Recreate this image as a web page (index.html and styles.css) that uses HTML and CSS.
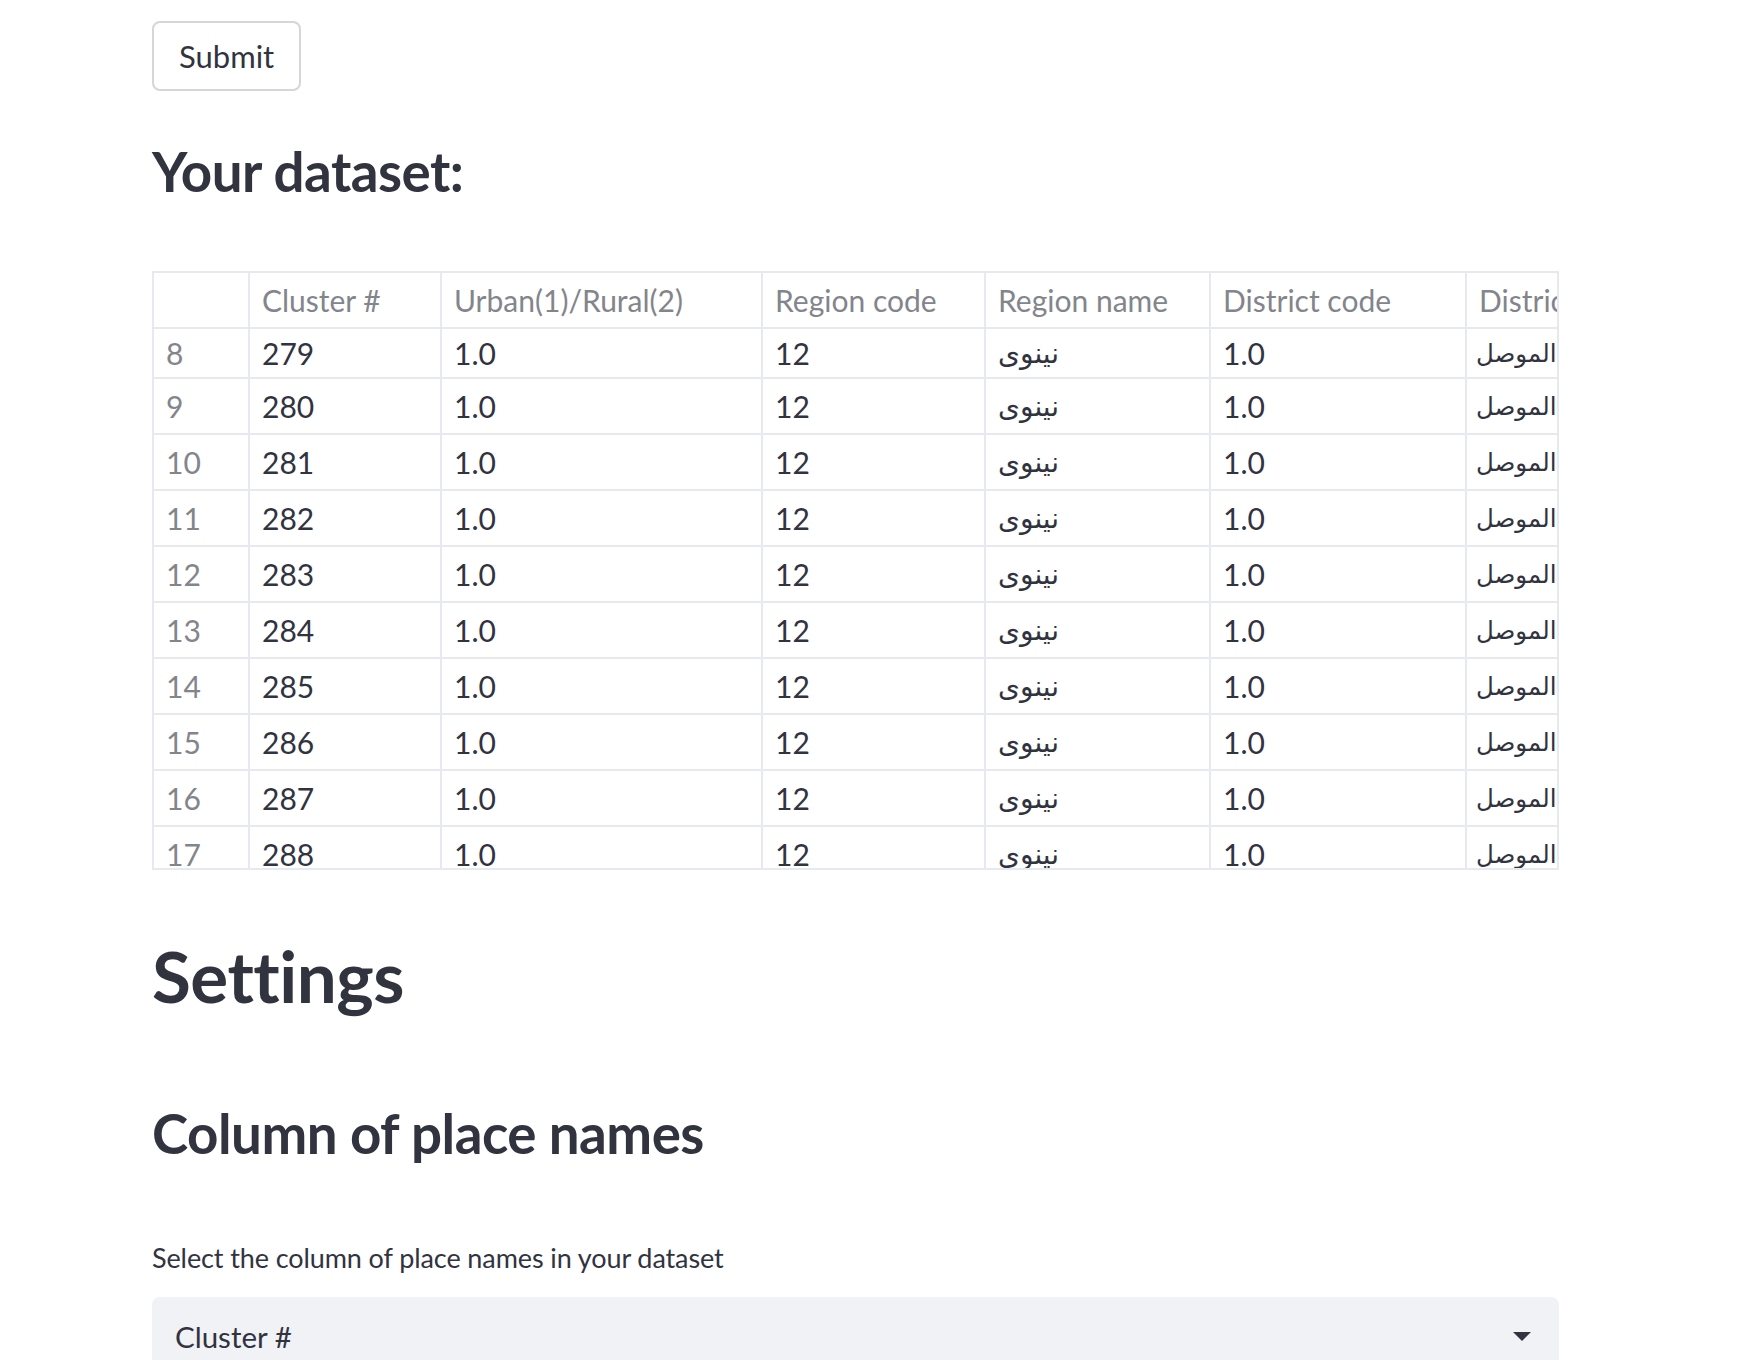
FILE: index.html
```html
<!DOCTYPE html>
<html lang="en">
<head>
<meta charset="utf-8">
<title>Dataset</title>
<link rel="stylesheet" href="styles.css">
</head>
<body>
<main class="main">
  <div class="block">
    <button class="btn" type="button">Submit</button>
    <h3 class="h3 title-dataset">Your dataset:</h3>
    <div class="df">
      <div class="grid">
        <div class="cell head idx"></div>
        <div class="cell head">Cluster #</div>
        <div class="cell head">Urban(1)/Rural(2)</div>
        <div class="cell head">Region code</div>
        <div class="cell head">Region name</div>
        <div class="cell head">District code</div>
        <div class="cell head">District name</div>

        <div class="cell idx">8</div><div class="cell">279</div><div class="cell">1.0</div><div class="cell">12</div><div class="cell ar">نينوى</div><div class="cell">1.0</div><div class="cell ar last">الموصل</div>
        <div class="cell idx">9</div><div class="cell">280</div><div class="cell">1.0</div><div class="cell">12</div><div class="cell ar">نينوى</div><div class="cell">1.0</div><div class="cell ar last">الموصل</div>
        <div class="cell idx">10</div><div class="cell">281</div><div class="cell">1.0</div><div class="cell">12</div><div class="cell ar">نينوى</div><div class="cell">1.0</div><div class="cell ar last">الموصل</div>
        <div class="cell idx">11</div><div class="cell">282</div><div class="cell">1.0</div><div class="cell">12</div><div class="cell ar">نينوى</div><div class="cell">1.0</div><div class="cell ar last">الموصل</div>
        <div class="cell idx">12</div><div class="cell">283</div><div class="cell">1.0</div><div class="cell">12</div><div class="cell ar">نينوى</div><div class="cell">1.0</div><div class="cell ar last">الموصل</div>
        <div class="cell idx">13</div><div class="cell">284</div><div class="cell">1.0</div><div class="cell">12</div><div class="cell ar">نينوى</div><div class="cell">1.0</div><div class="cell ar last">الموصل</div>
        <div class="cell idx">14</div><div class="cell">285</div><div class="cell">1.0</div><div class="cell">12</div><div class="cell ar">نينوى</div><div class="cell">1.0</div><div class="cell ar last">الموصل</div>
        <div class="cell idx">15</div><div class="cell">286</div><div class="cell">1.0</div><div class="cell">12</div><div class="cell ar">نينوى</div><div class="cell">1.0</div><div class="cell ar last">الموصل</div>
        <div class="cell idx">16</div><div class="cell">287</div><div class="cell">1.0</div><div class="cell">12</div><div class="cell ar">نينوى</div><div class="cell">1.0</div><div class="cell ar last">الموصل</div>
        <div class="cell idx">17</div><div class="cell">288</div><div class="cell">1.0</div><div class="cell">12</div><div class="cell ar">نينوى</div><div class="cell">1.0</div><div class="cell ar last">الموصل</div>
      </div>
    </div>
    <h2 class="h2">Settings</h2>
    <h3 class="h3 title-column">Column of place names</h3>
    <label class="label">Select the column of place names in your dataset</label>
    <div class="select">
      <span class="select-value">Cluster #</span>
      <svg class="select-arrow" width="18" height="9" viewBox="0 0 18 9"><path d="M0 0 H18 L9 9 Z" fill="#31333f"/></svg>
    </div>
  </div>
</main>
</body>
</html>
```
FILE: styles.css
```css
html, body {
  margin: 0;
  padding: 0;
  background: #ffffff;
}
body {
  font-family: "Lato", "DejaVu Sans", sans-serif;
  color: #31333f;
}
.main {
  padding: 21px 0 0 152px;
}
.block {
  width: 1407px;
  display: flex;
  flex-direction: column;
  align-items: flex-start;
}
.btn {
  height: 70px;
  padding: 0 25px;
  background: #ffffff;
  border: 2px solid #d6d6d9;
  border-radius: 8px;
  font-family: "Lato", sans-serif;
  font-size: 31px;
  color: #31333f;
  line-height: 1;
}
.h3 {
  font-size: 54.7px;
  font-weight: 700;
  line-height: 1.2;
  margin: 0;
  letter-spacing: -0.5px;
}
.title-dataset {
  margin-top: 48px;
  margin-bottom: 66px;
}
.df {
  width: 1407px;
  height: 599px;
  box-sizing: border-box;
  border: 2px solid #e6e9ef;
  overflow: hidden;
}
.grid {
  display: grid;
  grid-template-columns: 96px 192px 321px 223px 225px 256px 320px;
  grid-auto-rows: 56px;
  grid-template-rows: 56px 50px;
}
.cell {
  box-sizing: border-box;
  border-right: 2px solid #e6e9ef;
  border-bottom: 2px solid #e6e9ef;
  padding: 0 12px;
  display: flex;
  align-items: center;
  font-size: 30px;
  white-space: nowrap;
  overflow: hidden;
  color: #31333f;
}
.cell.head, .cell.idx {
  color: #83858c;
}
.cell.ar {
  font-size: 28px;
}
.cell.last {
  padding-left: 9px;
  font-size: 24.5px;
}
.h2 {
  font-size: 71px;
  font-weight: 700;
  line-height: 1.2;
  margin: 63px 0 0 0;
  letter-spacing: -0.5px;
}
.title-column {
  margin-top: 83px;
}
.label {
  font-size: 27px;
  line-height: 1.2;
  margin-top: 76px;
  letter-spacing: -0.1px;
}
.select {
  margin-top: 22px;
  width: 1407px;
  height: 80px;
  box-sizing: border-box;
  background: #f0f2f6;
  border-radius: 8px;
  display: flex;
  align-items: center;
  justify-content: space-between;
  padding: 0 28px 0 23px;
}
.select-value {
  font-size: 29.5px;
}
.select-arrow {
  display: block;
}
```
